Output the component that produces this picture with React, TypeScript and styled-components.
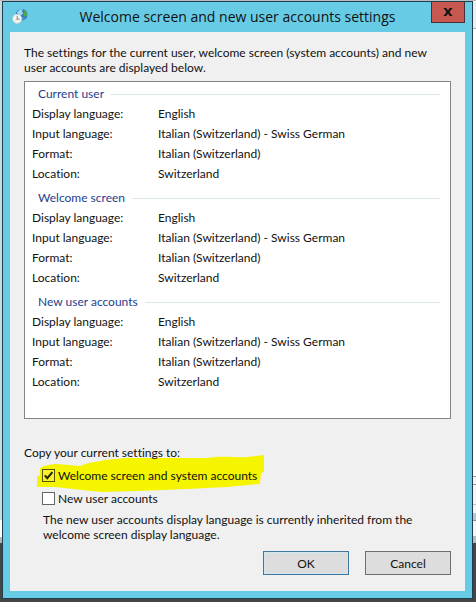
import React, { useState } from "react";
import styled, { createGlobalStyle } from "styled-components";

const GlobalStyle = createGlobalStyle`
  * { box-sizing: border-box; }
  body {
    margin: 0;
    background: #fff;
    color: #111;
    font: 12px/15px Lato, "Open Sans", sans-serif;
    font-variant-ligatures: none;
  }
  h1, h2, p, dl, dd, dt, fieldset, legend { margin: 0; padding: 0; border: 0; font-size: inherit; font-weight: inherit; }
`;

const Desktop = styled.div`
  display: grid;
  grid-template-columns: 2px minmax(0, 1fr) 3px;
  min-height: 100vh;
  padding-top: 1px;
  background: linear-gradient(#b9bdbf 0 1px, transparent 1px calc(100% - 59px), #424446 calc(100% - 59px));
`;

const LeftEdge = styled.div`
  background: linear-gradient(#c3dde3 0 519px, #fff 519px 536px, #b3b7b9 536px 542px, #424446 542px);
`;

const RightEdge = styled.div`
  background: linear-gradient(
    #eef1f3 0 27px, #a9afb5 27px 28px, #fff 28px 475px, #8d98a8 475px 476px, #f3f6fa 476px 483px,
    #8d98a8 483px 484px, #f3f6fa 484px 503px, #b9c6d6 503px 504px, #f3f6fa 504px 512px,
    #b9c6d6 512px 519px, #8592a2 519px 520px, #f3f6fa 520px 535px, #b3bac3 535px 542px, #424446 542px
  );
`;

const Window = styled.section`
  display: flex;
  flex-direction: column;
  align-self: start;
  padding: 0 7px 7px;
  border: 1px solid #1f3f4c;
  background: #68cbe6;
`;

const TitleBar = styled.header`
  display: grid;
  grid-template-columns: 34px minmax(0, 1fr) 34px;
  height: 30px;
`;

const AppIcon = styled.svg`
  width: 16px;
  height: 16px;
  margin: 6px 2px;
`;

const Title = styled.h1`
  padding-top: 4px;
  font-family: "Open Sans", "Noto Sans", sans-serif;
  font-size: 14px;
  line-height: 22px;
  text-align: center;
  white-space: nowrap;
`;

const CloseButton = styled.button`
  display: grid;
  place-items: center;
  width: 34px;
  height: 21px;
  padding: 0;
  border: 1px solid #4a3038;
  border-top: 0;
  background: #c75850;
`;

const Body = styled.main`
  padding: 13px 14px 16px;
  background: #f0f0f0;
`;

const Intro = styled.p`
  padding-bottom: 6px;
`;

const SettingsPanel = styled.div`
  display: grid;
  gap: 4px;
  padding: 2px 8px 26px 7px;
  border: 1px solid #7f858a;
  background: #fff;
`;

const GroupHeading = styled.h2`
  display: flex;
  align-items: center;
  gap: 7px;
  padding: 0 2px 0 6px;
  color: #24408e;
  line-height: 20px;
  &::after {
    content: "";
    flex: 1;
    height: 1px;
    background: #dce7ea;
  }
`;

const SettingList = styled.dl`
  display: grid;
  grid-template-columns: 126px minmax(0, 1fr);
  line-height: 20px;
`;

const CopyOptions = styled.fieldset`
  display: grid;
  padding-top: 26px;
`;

const Legend = styled.legend`
  position: relative;
  z-index: 1;
  float: left;
  padding-bottom: 3px;
  line-height: 16px;
`;

const OptionRow = styled.div`
  position: relative;
  display: flex;
  align-items: center;
  height: 23px;
  margin-left: 18px;
`;

const Option = styled.label`
  position: relative;
  display: flex;
  align-items: center;
  gap: 3px;
`;

const Checkbox = styled.input`
  appearance: none;
  width: 13px;
  height: 13px;
  margin: 0;
  border: 1px solid #666;
  background: #fff;
  &:checked { background: #f7f32c; border-color: #55540c; }
`;

const CheckMark = styled.svg`
  position: absolute;
  left: 0;
  width: 13px;
  height: 13px;
  pointer-events: none;
`;

const Marker = styled.svg`
  position: absolute;
  left: -5px;
  top: -9px;
  width: 228px;
  height: 38px;
`;

const Note = styled.p`
  padding: 2px 0 1px 19px;
`;

const Actions = styled.footer`
  display: flex;
  justify-content: flex-end;
  gap: 16px;
  padding-top: 8px;
`;

const ActionButton = styled.button<{ $default?: boolean }>`
  width: 86px;
  height: 24px;
  padding: 0;
  border: 1px solid ${(p) => (p.$default ? "#3f77a0" : "#707070")};
  background: #dddddd;
  box-shadow: ${(p) => (p.$default ? "inset 0 0 0 1px #d0e6f3" : "none")};
  color: #111;
  font: inherit;
`;

const groups = ["Current user", "Welcome screen", "New user accounts"];
const settings = [
  ["Display language:", "English"],
  ["Input language:", "Italian (Switzerland) - Swiss German"],
  ["Format:", "Italian (Switzerland)"],
  ["Location:", "Switzerland"],
];

function RegionIcon() {
  return (
    <AppIcon viewBox="0 0 16 16" aria-hidden="true">
      <circle cx="9.6" cy="6.7" r="5.8" fill="#2f74b8" />
      <path d="M4.6 4.7 7.6 1.5 11 1.2l-1 2.5 1.5 1.2L9 7.6 6 6z" fill="#9ad8f2" />
      <path d="M12 2.2c2 1 3.3 3 3 5L13 9l-2-1.8 1-2.2z" fill="#55a844" />
      <path d="M9 9.2l3-.5 1 1.8-2 1.5z" fill="#3d9ade" />
      <circle cx="5.2" cy="10.8" r="4.6" fill="#f5f5ef" stroke="#c3d0d4" strokeWidth="0.8" />
      <path d="M5.2 7.8v3.3h2.5" fill="none" stroke="#6d7980" strokeWidth="0.9" />
      <path d="M5.2 11.1 3.8 12.6" stroke="#d3704c" strokeWidth="0.7" />
    </AppIcon>
  );
}

function CopyOption({ label, initial = false }: { label: string; initial?: boolean }) {
  const [checked, setChecked] = useState(initial);
  return (
    <Option>
      <Checkbox type="checkbox" checked={checked} onChange={(e) => setChecked(e.target.checked)} />
      {checked && (
        <CheckMark viewBox="0 0 13 13" aria-hidden="true">
          <path d="M2.8 6.3 5.3 9.2 10.4 3.2" fill="none" stroke="#24240a" strokeWidth="2" />
        </CheckMark>
      )}
      {label}
    </Option>
  );
}

export default function App() {
  return (
    <>
      <GlobalStyle />
      <Desktop>
        <LeftEdge />
        <Window>
          <TitleBar>
            <RegionIcon />
            <Title>Welcome screen and new user accounts settings</Title>
            <CloseButton aria-label="Close">
              <svg width="10" height="8" viewBox="0 0 10 8" aria-hidden="true">
                <path d="M0.5 0h2.7L5 2.4 6.8 0h2.7L6.4 4l3.1 4H6.8L5 5.6 3.2 8H0.5L3.6 4z" fill="#111" />
              </svg>
            </CloseButton>
          </TitleBar>
          <Body>
            <Intro>
              The settings for the current user, welcome screen (system accounts) and new
              user accounts are displayed below.
            </Intro>
            <SettingsPanel>
              {groups.map((group) => (
                <section key={group}>
                  <GroupHeading>{group}</GroupHeading>
                  <SettingList>
                    {settings.map(([name, value]) => (
                      <React.Fragment key={name}>
                        <dt>{name}</dt>
                        <dd>{value}</dd>
                      </React.Fragment>
                    ))}
                  </SettingList>
                </section>
              ))}
            </SettingsPanel>
            <CopyOptions>
              <Legend>Copy your current settings to:</Legend>
              <OptionRow>
                <Marker viewBox="0 0 228 38" aria-hidden="true">
                  <path
                    d="M3 13C8 10 14 9 20 9L43 11C52 7 60 7 68 5L90 3 130 3 170 3C185 0 200 3 210 2L227 0 227 17 224 18 223 29 190 32 150 34 100 36C80 36 65 38 54 36L18 32 0 32 0 22 3 20z"
                    fill="#f5f500"
                  />
                </Marker>
                <CopyOption label="Welcome screen and system accounts" initial />
              </OptionRow>
              <OptionRow>
                <CopyOption label="New user accounts" />
              </OptionRow>
              <Note>
                The new user accounts display language is currently inherited from the
                welcome screen display language.
              </Note>
            </CopyOptions>
            <Actions>
              <ActionButton $default>OK</ActionButton>
              <ActionButton>Cancel</ActionButton>
            </Actions>
          </Body>
        </Window>
        <RightEdge />
      </Desktop>
    </>
  );
}
